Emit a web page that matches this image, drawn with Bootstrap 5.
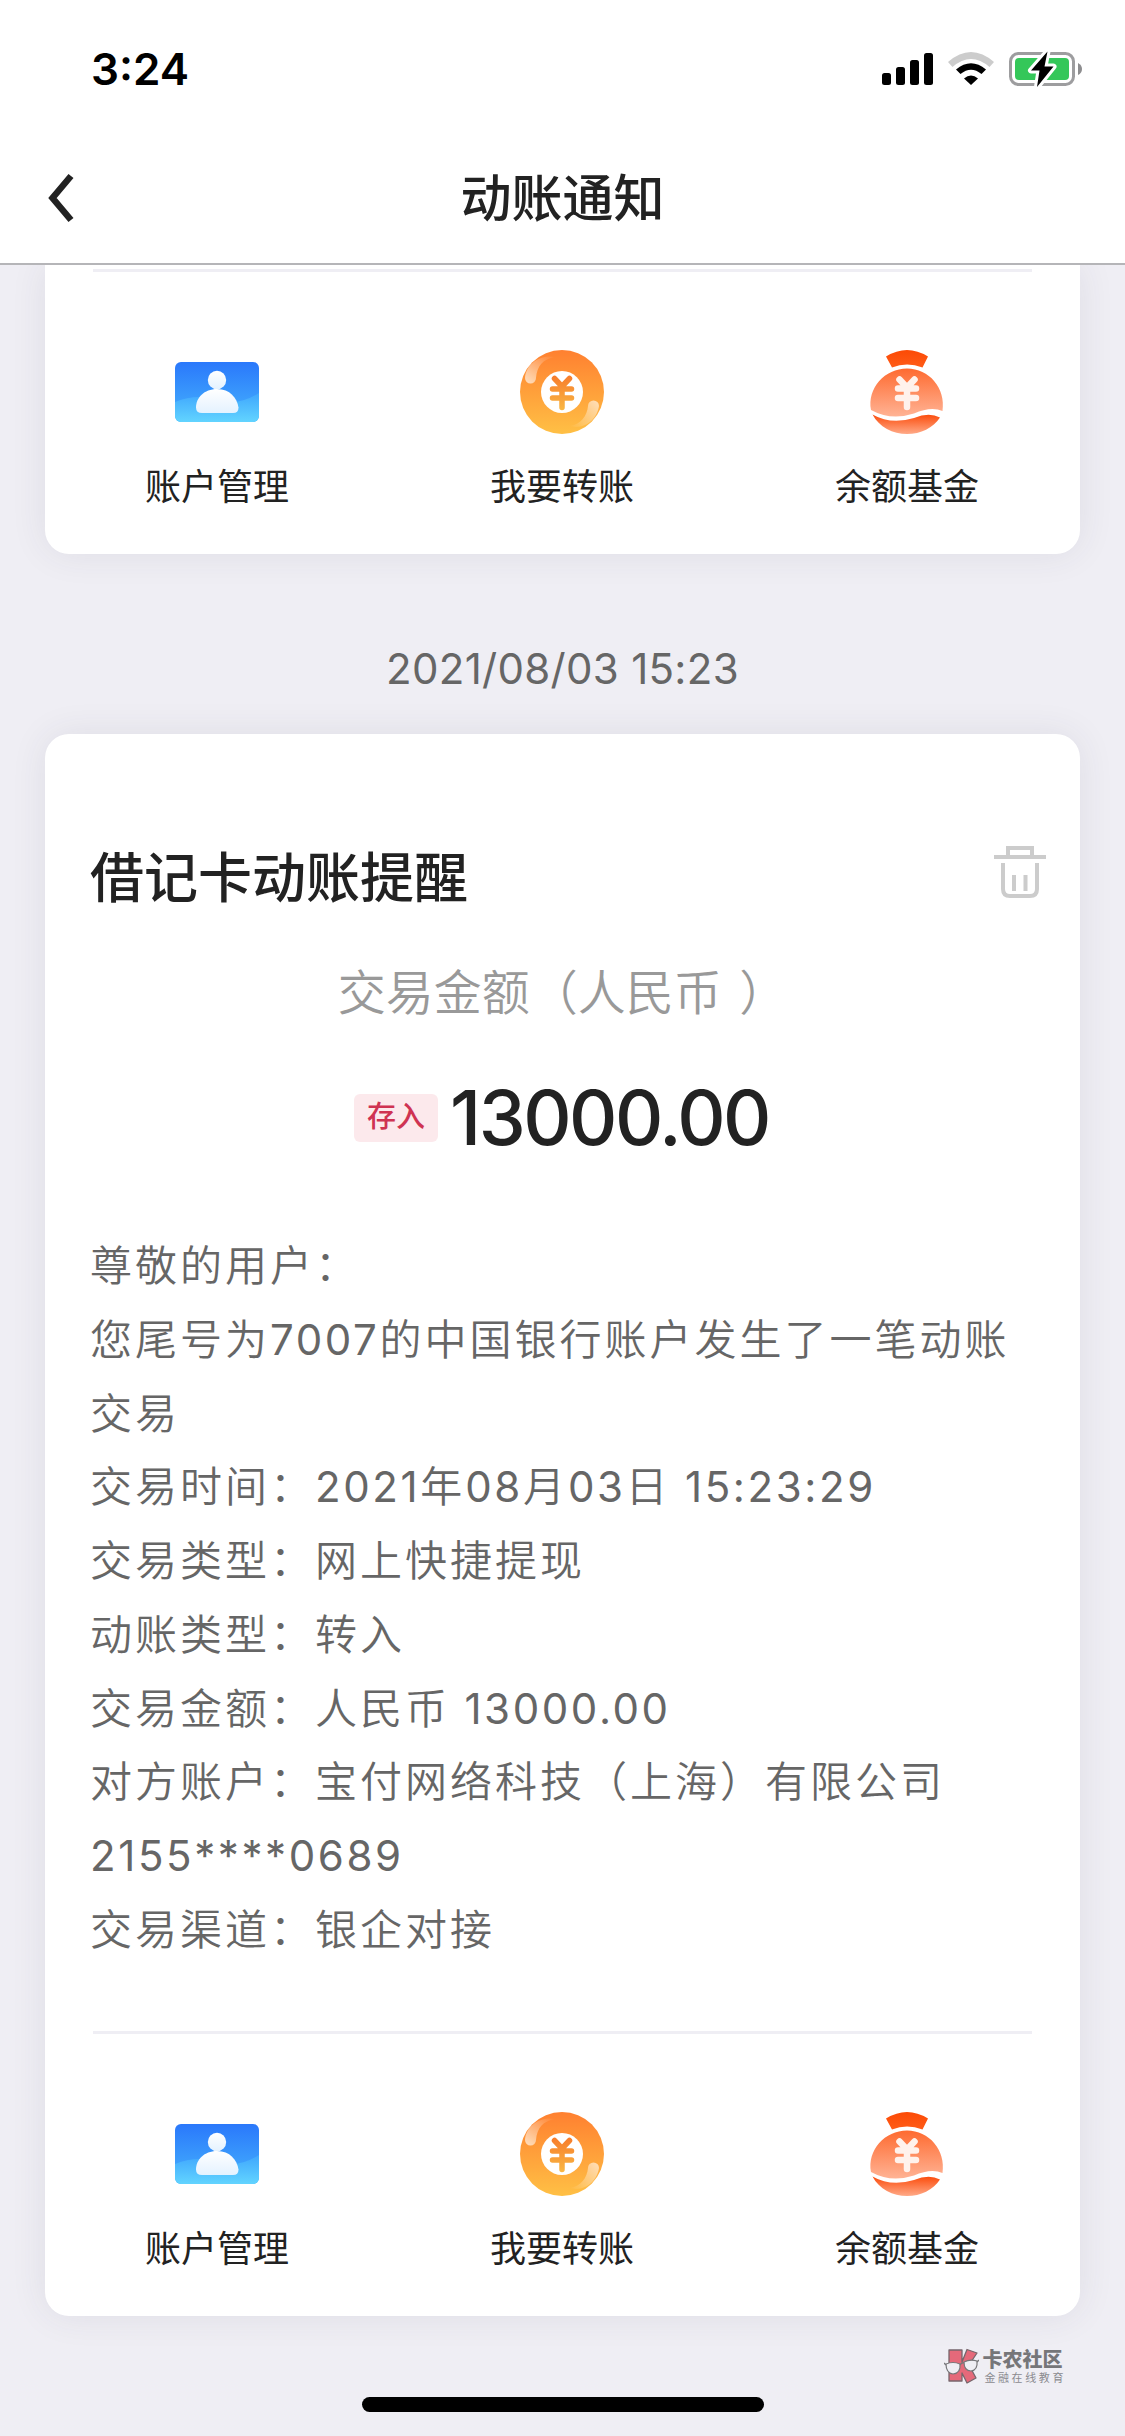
<!DOCTYPE html>
<html lang="zh-CN">
<head>
<meta charset="utf-8">
<meta name="viewport" content="width=device-width, initial-scale=1">
<title>动账通知</title>
<link href="https://cdn.jsdelivr.net/npm/bootstrap@5.3.0/dist/css/bootstrap.min.css" rel="stylesheet">
<style>
  body { background: #efeef4; color: #222; font-family: Inter, "Noto Sans CJK SC", sans-serif; height: 2436px; overflow: hidden; }
  .app-top { height: 265px; border-bottom: 2px solid #b5b5b8; z-index: 2; }
  .status-row { height: 132px; padding: 6px 43px 0 91px; }
  .clock { font-size: 44px; font-weight: 600; line-height: 1; letter-spacing: 0; }
  .title-row { height: 131px; padding: 0 0 0 47px; }
  .page-title { font-size: 51px; font-weight: 500; line-height: 1; padding-top: 1px; }
  .notice { margin: 0 45px; border: 0; border-radius: 24px; box-shadow: 0 0 36px rgba(60,60,80,.09); }
  .notice-first { border-radius: 0 0 24px 24px; padding-top: 4px; }
  .rule { height: 3px; margin: 0 48px; background: #efeef4; }
  .action-row { height: 282px; padding-top: 78px; }
  .action-row a { color: #222; font-size: 36px; line-height: 50px; padding-right: 1px; }
  .action-row svg { margin-bottom: 28px; }
  .stamp { height: 180px; padding-top: 90px; font-size: 42px; line-height: 50px; color: #666; letter-spacing: .3px; }
  .notice-head { margin-top: 110px; height: 68px; padding: 0 34px 0 45px; }
  .notice-title { font-size: 54px; font-weight: 500; line-height: 68px; padding-top: 2px; }
  .trash { margin-bottom: 12px; }
  .sum-label { margin-top: 50px; font-size: 48px; line-height: 62px; height: 60px; color: #999; font-weight: 350; word-spacing: 4px; }
  .sum-row { margin-top: 51px; height: 90px; gap: 12px; padding-right: 2px; }
  .kind { width: 84px; height: 48px; border-radius: 6px; background: #fce9ec; color: #cf3352; font-size: 29px; line-height: 45px; font-weight: 500; }
  .sum { font-size: 75px; font-weight: 500; line-height: 92px; letter-spacing: -2.500px; }
  .detail { margin: 66px 45px 65px 45px; font-size: 42px; letter-spacing: 3px; line-height: 73.75px; height: 737px; color: #666; font-weight: 350; }
  .detail div { white-space: nowrap; }
  .num { letter-spacing: 2.600px; font-weight: 400; }
  .mark-box { right: 59px; top: 2348px; gap: 3px; }
  .mark-a { font-size: 20px; font-weight: 900; line-height: 24px; color: #767679; }
  .mark-b { font-size: 11px; line-height: 12px; letter-spacing: 2.6px; color: #8b8b90; padding-left: 2px; }
  .home-bar { left: 362px; top: 2397px; width: 402px; height: 15px; background: #000; }
</style>
<script src="https://cdn.jsdelivr.net/npm/bootstrap@5.3.0/dist/js/bootstrap.bundle.min.js"></script>
</head>
<body class="position-relative">

<svg width="0" height="0" class="position-absolute" aria-hidden="true">
  <defs>
    <linearGradient id="gBlue" x1="0" y1="0" x2="0" y2="1"><stop offset="0" stop-color="#2a78fb"/><stop offset="1" stop-color="#46b4fd"/></linearGradient>
    <linearGradient id="gSky" x1="0" y1="0" x2="0" y2="1"><stop offset="0" stop-color="#3fa6fd"/><stop offset="1" stop-color="#62d4ff"/></linearGradient>
    <linearGradient id="gPerson" x1="0" y1="0" x2="0" y2="1"><stop offset="0" stop-color="#fff"/><stop offset="1" stop-color="#e4f2ff"/></linearGradient>
    <linearGradient id="gCoin" x1="0" y1="0" x2="0" y2="1"><stop offset="0" stop-color="#ff8030"/><stop offset="1" stop-color="#ffc045"/></linearGradient>
    <linearGradient id="gYen" gradientUnits="userSpaceOnUse" x1="0" y1="26" x2="0" y2="60"><stop offset="0" stop-color="#f77d2c"/><stop offset="1" stop-color="#f9b743"/></linearGradient>
    <linearGradient id="gTail1" x1=".1" y1="1" x2="1" y2="0"><stop offset="0" stop-color="#fff" stop-opacity=".65"/><stop offset="1" stop-color="#fff" stop-opacity="0"/></linearGradient>
    <linearGradient id="gTail2" x1="1" y1="0" x2="0" y2="1"><stop offset="0" stop-color="#fff" stop-opacity=".65"/><stop offset="1" stop-color="#fff" stop-opacity="0"/></linearGradient>
    <linearGradient id="gKnot" x1="0" y1="0" x2="0" y2="1"><stop offset="0" stop-color="#fc4a05"/><stop offset="1" stop-color="#ff5c18"/></linearGradient>
    <linearGradient id="gBag" x1="0" y1="0" x2="0" y2="1"><stop offset="0" stop-color="#fe6a30"/><stop offset="1" stop-color="#ffb394"/></linearGradient>
    <linearGradient id="gBase" x1="0" y1="0" x2="0" y2="1"><stop offset="0" stop-color="#fb4c0c"/><stop offset="1" stop-color="#ffaa88"/></linearGradient>
    <symbol id="icAccount" viewBox="0 0 84 84">
      <rect x="0" y="12" width="84" height="60" rx="6" fill="url(#gBlue)"/>
      <path d="M0 52Q22 43 42 50T84 43V66a6 6 0 0 1-6 6H6a6 6 0 0 1-6-6Z" fill="url(#gSky)"/>
      <circle cx="42" cy="30" r="9.2" fill="url(#gPerson)"/>
      <path d="M42 39C29 39 21 48 21 57.500Q21 63 27 63H58Q63.500 63 63.500 57.500C62 48 55 39 42 39Z" fill="url(#gPerson)"/>
    </symbol>
    <symbol id="icTransfer" viewBox="0 0 84 84">
      <circle cx="42" cy="42" r="42" fill="url(#gCoin)"/>
      <circle cx="42" cy="42" r="21" fill="#fff"/>
      <path d="M34.500 28.500L42 36.500L49.500 28.500M32.500 39H51.500M32.500 48H51.500M42 39V57.500" fill="none" stroke="url(#gYen)" stroke-width="5.500" stroke-linecap="round" stroke-linejoin="round"/>
      <path d="M5 28C6 14 20 4 35 7C23 9 17 16 16 28A5.500 5.500 0 1 1 5 28Z" fill="url(#gTail1)"/>
      <path d="M79 56C77 70 64 80 50 76C61 74 67 66 68 56A5.500 5.500 0 1 1 79 56Z" fill="url(#gTail2)"/>
    </symbol>
    <symbol id="icFund" viewBox="0 0 84 84">
      <path d="M21 6.500Q42 -6.500 63 6.500L57.500 17.500Q42 11.500 27 17.500Z" fill="url(#gKnot)"/>
      <path d="M6 60C2 38 20 18.500 42 18.500S81 38 77.500 61Q66 56 49 63.500Q26 71 6 60Z" fill="url(#gBag)"/>
      <path d="M7.500 64.500Q26 75 49 68Q64 62 75 67.500C68 78 56 84 42 84S14 77 7.500 64.500Z" fill="url(#gBase)"/>
      <path d="M34.500 29.500L42 37.500L49.500 29.500M33 38.500H51M33 48H51M42 38.500V57" fill="none" stroke="#fff2ec" stroke-width="6.500" stroke-linecap="round" stroke-linejoin="round"/>
    </symbol>
  </defs>
</svg>

<header class="app-top bg-white position-relative">
  <div class="status-row d-flex align-items-center justify-content-between text-black">
    <span class="clock">3:24</span>
    <svg width="202" height="40" viewBox="880 49 202 40">
      <g>
        <rect x="882" y="73" width="9" height="12" rx="2.500"/><rect x="896" y="67" width="9" height="18" rx="2.500"/>
        <rect x="910" y="60" width="9" height="25" rx="2.500"/><rect x="924" y="53" width="9" height="32" rx="2.500"/>
      </g>
      <path d="M948 62Q971 42 994 62L989.500 67Q971 51 952.500 67Z" fill="#ccc"/>
      <path d="M956 69.500Q971 57 986 69.500L981.500 74Q971 65.500 960.500 74Z"/>
      <path d="M964 78.500Q971 72.500 978 78.500L971 85Z"/>
      <rect x="1010.500" y="53.500" width="63" height="31" rx="8" fill="none" stroke="#9d9d9f" stroke-width="3"/>
      <path d="M1078 63Q1082 65 1082 69T1078 75Z" fill="#8d8d8f"/>
      <rect x="1015" y="58" width="54" height="22" rx="4" fill="#34c759"/>
      <path d="M1047.500 51.500L1031 70.500H1039.500L1037 87L1053.500 66.500H1044.500Z" fill="#000" stroke="#fff" stroke-width="6" paint-order="stroke" stroke-linejoin="round"/>
    </svg>
  </div>
  <div class="title-row position-relative d-flex align-items-center">
    <svg width="28" height="50" viewBox="0 0 28 50"><path d="M24 3L5.500 25L24 47" fill="none" stroke="#222" stroke-width="6.500"/></svg>
    <h1 class="page-title position-absolute start-0 end-0 text-center m-0">动账通知</h1>
  </div>
</header>

<main>
  <section class="card notice notice-first">
    <div class="rule"></div>
    <div class="row g-0 action-row text-center">
      <a class="col-4 d-flex flex-column align-items-center text-decoration-none"><svg width="84" height="84"><use href="#icAccount"/></svg>账户管理</a>
      <a class="col-4 d-flex flex-column align-items-center text-decoration-none"><svg width="84" height="84"><use href="#icTransfer"/></svg>我要转账</a>
      <a class="col-4 d-flex flex-column align-items-center text-decoration-none"><svg width="84" height="84"><use href="#icFund"/></svg>余额基金</a>
    </div>
  </section>

  <div class="stamp text-center">2021/08/03 15:23</div>

  <section class="card notice">
    <div class="notice-head d-flex align-items-center justify-content-between">
      <h2 class="notice-title m-0">借记卡动账提醒</h2>
      <svg width="52" height="52" viewBox="0 0 52 52" class="trash" fill="none" stroke="#ccc" stroke-width="4"><path d="M0 11H52M14 10V2H38V10M9 17V43Q9 50 16 50H36Q43 50 43 43V17M20 29V45M31.500 29V45"/></svg>
    </div>
    <div class="sum-label text-center">交易金额（人民币 ）</div>
    <div class="sum-row d-flex align-items-center justify-content-center">
      <span class="kind text-center">存入</span><span class="sum">13000.00</span>
    </div>
    <div class="detail">
      <div>尊敬的用户：</div>
      <div>您尾号为<span class="num">7007</span>的中国银行账户发生了一笔动账</div>
      <div>交易</div>
      <div>交易时间：<span class="num">2021</span>年<span class="num">08</span>月<span class="num">03</span>日<span class="num"> 15:23:29</span></div>
      <div>交易类型：网上快捷提现</div>
      <div>动账类型：转入</div>
      <div>交易金额：人民币<span class="num"> 13000.00</span></div>
      <div>对方账户：宝付网络科技（上海）有限公司</div>
      <div><span class="num">2155****0689</span></div>
      <div>交易渠道：银企对接</div>
    </div>
    <div class="rule"></div>
    <div class="row g-0 action-row text-center">
      <a class="col-4 d-flex flex-column align-items-center text-decoration-none"><svg width="84" height="84"><use href="#icAccount"/></svg>账户管理</a>
      <a class="col-4 d-flex flex-column align-items-center text-decoration-none"><svg width="84" height="84"><use href="#icTransfer"/></svg>我要转账</a>
      <a class="col-4 d-flex flex-column align-items-center text-decoration-none"><svg width="84" height="84"><use href="#icFund"/></svg>余额基金</a>
    </div>
  </section>
</main>

<div class="mark-box position-absolute d-flex">
  <svg width="35" height="36" viewBox="0 0 35 36">
    <path d="M5 2H18V14L23 1.500L33 5L25 17L32 30L23 35L18 25V33H5Z" fill="#e5697a" stroke="#77666c" stroke-width="1.300" stroke-linejoin="round"/>
    <path d="M2 16Q9 13 16 16Q17 25 9 26Q2 25 2 16ZM20 14Q26 11 33 13Q34 22 27 23Q20 23 20 14Z" fill="#efeef4" stroke="#77777a" stroke-width="1.200"/>
    <path d="M16 17Q18 14 20 15M2 17L0 15M33 14L35 12" fill="none" stroke="#77777a" stroke-width="1.300"/>
  </svg>
  <div class="text-nowrap"><div class="mark-a">卡农社区</div><div class="mark-b">金融在线教育</div></div>
</div>
<div class="home-bar position-absolute rounded-pill"></div>
</body>
</html>
